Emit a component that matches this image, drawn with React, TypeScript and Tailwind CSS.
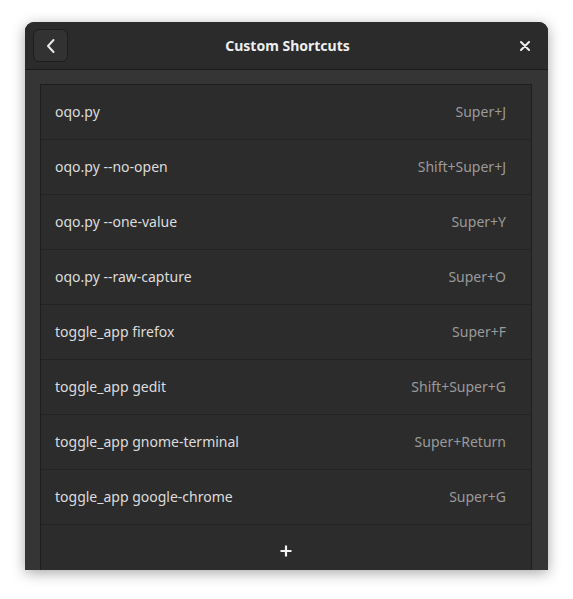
const shortcuts = [
  { name: "oqo.py", keys: "Super+J" },
  { name: "oqo.py --no-open", keys: "Shift+Super+J" },
  { name: "oqo.py --one-value", keys: "Super+Y" },
  { name: "oqo.py --raw-capture", keys: "Super+O" },
  { name: "toggle_app firefox", keys: "Super+F" },
  { name: "toggle_app gedit", keys: "Shift+Super+G" },
  { name: "toggle_app gnome-terminal", keys: "Super+Return" },
  { name: "toggle_app google-chrome", keys: "Super+G" },
]

function ShortcutRow({ name, keys }: { name: string; keys: string }) {
  return (
    <div className="flex h-[55px] items-center justify-between border-b border-[#232323] pb-[2px] pl-[14px] pr-[25px]">
      <span className="text-[#dcdcdc]">{name}</span>
      <span className="text-[#9a9a9a]">{keys}</span>
    </div>
  )
}

export default function App() {
  return (
    <div className="min-h-[599px] bg-white pl-[25px] pt-[22px] font-['Noto_Sans',sans-serif] text-[14px]">
      <div className="flex h-[548px] w-[523px] flex-col overflow-hidden rounded-t-[9px] bg-[#353535] shadow-[0_3px_14px_rgba(0,0,0,0.35)]">
        {/* header bar */}
        <div className="flex h-[48px] shrink-0 items-center justify-between border-b border-[#1b1b1b] bg-[#2b2b2b] pl-[8px] pr-[6px]">
          <button className="flex h-[33px] w-[35px] items-center justify-center rounded-[6px] border border-[#1e1e1e] bg-[#323232]">
            <svg width="10" height="16" viewBox="0 0 10 16" fill="none">
              <path d="M7.5 2 L2 8 L7.5 14" stroke="#e8e8e8" strokeWidth="2" strokeLinecap="round" strokeLinejoin="round" />
            </svg>
          </button>
          <span className="pb-[1px] text-[14px] font-bold text-[#eeeeee]">Custom Shortcuts</span>
          <div className="flex h-[33px] w-[35px] items-center justify-center">
            <svg width="10" height="10" viewBox="0 0 10 10" fill="none">
              <path d="M1 1 L9 9 M9 1 L1 9" stroke="#eeeeee" strokeWidth="2" strokeLinecap="round" />
            </svg>
          </div>
        </div>

        {/* list */}
        <div className="flex-1 overflow-hidden pl-[15px] pr-[16px] pt-[14px]">
          <div className="border border-[#1e1e1e] bg-[#2c2c2c]">
            {shortcuts.map((s) => (
              <ShortcutRow key={s.name} name={s.name} keys={s.keys} />
            ))}
            <div className="flex h-[51px] items-center justify-center">
              <svg width="12" height="12" viewBox="0 0 12 12" fill="none">
                <path d="M6 0.5 V11.5 M0.5 6 H11.5" stroke="#f2f2f2" strokeWidth="2.2" />
              </svg>
            </div>
          </div>
        </div>
      </div>
    </div>
  )
}
